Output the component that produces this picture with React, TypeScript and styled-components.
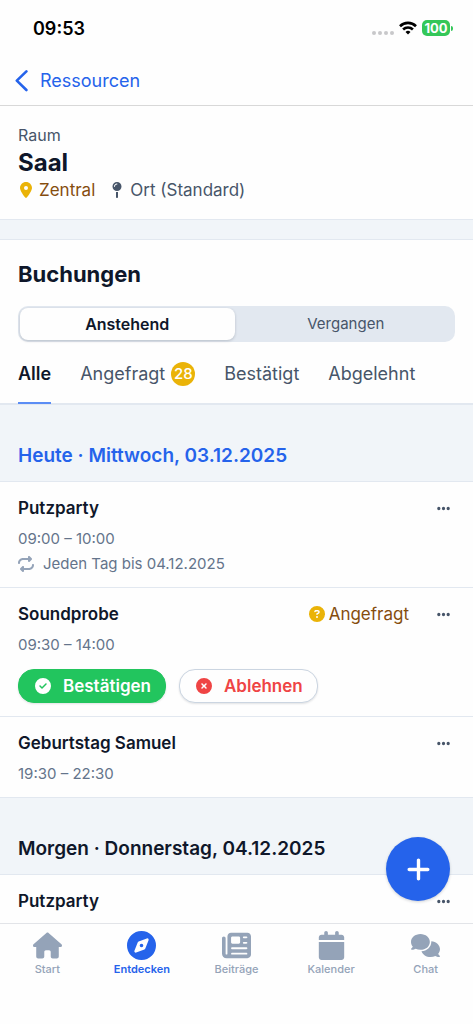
import React from 'react';
import styled, { createGlobalStyle } from 'styled-components';
import {
  FaCalendar,
  FaCircleCheck,
  FaCircleQuestion,
  FaCircleXmark,
  FaComments,
  FaCompass,
  FaEllipsis,
  FaHouse,
  FaLocationDot,
  FaMapPin,
  FaNewspaper,
  FaPlus,
  FaRepeat,
} from 'react-icons/fa6';

const color = {
  ink: '#0f172a',
  text: '#475569',
  muted: '#64748b',
  icon: '#94a3b8',
  line: '#e2e8f0',
  band: '#f1f5f9',
  blue: '#2563eb',
  yellow: '#eab308',
  brown: '#854d0e',
  green: '#22c55e',
  red: '#ef4444',
};

const GlobalStyle = createGlobalStyle`
  * { box-sizing: border-box; }
  body {
    margin: 0;
    background: #fff;
    color: ${color.ink};
    font-family: Inter, "Liberation Sans", sans-serif;
  }
  button { font: inherit; color: inherit; border: 0; padding: 0; background: none; cursor: pointer; }
  a { color: inherit; text-decoration: none; }
  h1, h2, h3, h4, p, ul { margin: 0; padding: 0; font-weight: inherit; list-style: none; }
  svg { display: block; flex: none; }
`;

const Screen = styled.div`
  display: flex;
  flex-direction: column;
  height: 100vh;
  background: #fefefe;
`;

const StatusBar = styled.div`
  display: flex;
  align-items: center;
  justify-content: space-between;
  height: 56px;
  padding: 0 20px 0 33px;
  color: #000;
  font-size: 18px;
  font-weight: 600;
`;

const StatusIcons = styled.div`
  display: flex;
  align-items: center;
  gap: 5px;
`;

const Battery = styled.div`
  display: flex;
  align-items: center;
  gap: 1px;
`;

const BatteryBody = styled.span`
  width: 28px;
  border-radius: 5px;
  background: #34c759;
  color: #fff;
  font-size: 13px;
  line-height: 16px;
  font-weight: 700;
  text-align: center;
`;

const BatteryCap = styled.span`
  width: 2px;
  height: 5px;
  border-radius: 0 2px 2px 0;
  background: #34c759;
`;

const Header = styled.header`
  display: flex;
  align-items: center;
  height: 50px;
  padding: 0 15px;
  border-bottom: 1px solid #d8d8d8;
`;

const BackLink = styled.a`
  display: flex;
  align-items: center;
  gap: 12px;
  color: ${color.blue};
  font-size: 18px;
  line-height: 24px;
`;

const Main = styled.main`
  flex: 1;
  min-height: 0;
  overflow-y: auto;
  scrollbar-width: none;
  background: ${color.band};
`;

const Summary = styled.section`
  padding: 17px 18px 18px;
  background: #fefefe;
  border-bottom: 1px solid ${color.line};
`;

const Kind = styled.p`
  color: ${color.text};
  font-size: 16px;
  line-height: 24px;
`;

const Name = styled.h1`
  font-size: 24px;
  line-height: 32px;
  font-weight: 700;
`;

const Facts = styled.ul`
  display: flex;
  gap: 14px;
`;

const Fact = styled.li<{ $tone: string }>`
  display: flex;
  align-items: center;
  gap: 5px;
  color: ${(p) => p.$tone};
  font-size: 17px;
  line-height: 22px;
`;

const Bookings = styled.section`
  margin-top: 19px;
  padding-top: 20px;
  background: #fefefe;
  border-top: 1px solid ${color.line};
`;

const BookingsTitle = styled.h2`
  padding: 0 18px;
  font-size: 22px;
  line-height: 28px;
  font-weight: 700;
`;

const Segments = styled.div`
  display: flex;
  gap: 4px;
  height: 36px;
  margin: 18px 18px 0;
  padding: 2px;
  border-radius: 10px;
  background: ${color.line};
`;

const Segment = styled.button<{ $on?: boolean }>`
  flex: 1 1 0;
  border-radius: 8px;
  font-size: ${(p) => (p.$on ? 16 : 15)}px;
  line-height: 20px;
  font-weight: ${(p) => (p.$on ? 600 : 400)};
  color: ${(p) => (p.$on ? color.ink : color.text)};
  background: ${(p) => (p.$on ? '#fefefe' : 'transparent')};
  box-shadow: ${(p) => (p.$on ? '0 1px 3px rgba(15, 23, 42, 0.2)' : 'none')};
`;

const Tabs = styled.div`
  display: flex;
  gap: 29px;
  padding: 0 18px;
  border-bottom: 2px solid ${color.line};
`;

const Tab = styled.button<{ $on?: boolean }>`
  display: flex;
  align-items: center;
  gap: 6px;
  margin-bottom: -1px;
  padding: 20px 0 16px;
  border-bottom: 2px solid ${(p) => (p.$on ? '#5b8df5' : 'transparent')};
  color: ${(p) => (p.$on ? color.ink : color.text)};
  font-size: 18px;
  line-height: 24px;
  font-weight: ${(p) => (p.$on ? 600 : 400)};
`;

const Badge = styled.span`
  width: 24px;
  border-radius: 12px;
  background: ${color.yellow};
  color: #fff;
  font-size: 15px;
  font-weight: 500;
  text-align: center;
`;

const DayTitle = styled.h3<{ $today?: boolean }>`
  padding: 39px 18px 13px;
  border-bottom: 1px solid ${color.line};
  background: ${color.band};
  color: ${(p) => (p.$today ? color.blue : color.ink)};
  font-size: 19px;
  line-height: 24px;
  font-weight: 600;
`;

const Booking = styled.article`
  padding: 14px 22px 11px 18px;
  border-bottom: 1px solid ${color.line};
  background: #fefefe;
`;

const BookingHead = styled.div`
  display: flex;
  align-items: center;
  line-height: 24px;
  margin-bottom: 6px;
`;

const BookingTitle = styled.h4`
  flex: 1;
  font-size: 17px;
  font-weight: 600;
`;

const State = styled.span`
  display: flex;
  align-items: center;
  gap: 4px;
  margin-right: 27px;
  color: ${color.brown};
  font-size: 17px;
`;

const MoreButton = styled.button`
  color: ${color.text};
`;

const Detail = styled.p`
  display: flex;
  align-items: center;
  gap: 9px;
  color: ${color.muted};
  font-size: 15px;
  line-height: 25px;

  svg { color: ${color.icon}; }
`;

const Actions = styled.div`
  display: flex;
  gap: 13px;
  padding: 12px 0 2px;
`;

const ActionButton = styled.button<{ $solid?: boolean }>`
  display: flex;
  align-items: center;
  gap: 12px;
  height: 34px;
  padding: 0 14px 0 16px;
  border: 1px solid ${(p) => (p.$solid ? color.green : '#cbd5e1')};
  border-radius: 16px;
  background: ${(p) => (p.$solid ? color.green : '#fefefe')};
  color: ${(p) => (p.$solid ? '#fff' : color.red)};
  box-shadow: 0 1px 2px rgba(15, 23, 42, 0.12);
  font-size: 17px;
  font-weight: 600;
`;

const Footer = styled.footer`
  position: relative;
`;

const AddButton = styled.button`
  position: absolute;
  right: 23px;
  bottom: calc(100% + 22px);
  display: flex;
  align-items: center;
  justify-content: center;
  width: 64px;
  height: 64px;
  border-radius: 50%;
  background: ${color.blue};
  color: #fff;
  box-shadow: 0 1px 3px rgba(15, 23, 42, 0.2);
`;

const TabBar = styled.nav`
  display: flex;
  padding: 7px 0 47px;
  border-top: 1px solid #e2e4e8;
  background: #fefefe;
`;

const TabLink = styled.a<{ $on?: boolean }>`
  flex: 1 1 0;
  display: flex;
  flex-direction: column;
  align-items: center;
  gap: 1px;
  color: ${(p) => (p.$on ? color.blue : color.icon)};
  font-size: 11px;
  line-height: 16px;
  font-weight: ${(p) => (p.$on ? 600 : 500)};
`;

interface Entry {
  title: string;
  time?: string;
  repeat?: string;
  requested?: boolean;
}

const today: Entry[] = [
  { title: 'Putzparty', time: '09:00 – 10:00', repeat: 'Jeden Tag bis 04.12.2025' },
  { title: 'Soundprobe', time: '09:30 – 14:00', requested: true },
  { title: 'Geburtstag Samuel', time: '19:30 – 22:30' },
];

const tomorrow: Entry[] = [{ title: 'Putzparty' }];

const destinations = [
  { label: 'Start', Icon: FaHouse },
  { label: 'Entdecken', Icon: FaCompass, on: true },
  { label: 'Beiträge', Icon: FaNewspaper },
  { label: 'Kalender', Icon: FaCalendar },
  { label: 'Chat', Icon: FaComments },
];

function BookingRow({ entry }: { entry: Entry }) {
  return (
    <Booking>
      <BookingHead>
        <BookingTitle>{entry.title}</BookingTitle>
        {entry.requested && (
          <State>
            <FaCircleQuestion size={16} color={color.yellow} />
            Angefragt
          </State>
        )}
        <MoreButton aria-label="Mehr">
          <FaEllipsis size={15} />
        </MoreButton>
      </BookingHead>
      {entry.time && <Detail>{entry.time}</Detail>}
      {entry.repeat && (
        <Detail>
          <FaRepeat size={16} />
          {entry.repeat}
        </Detail>
      )}
      {entry.requested && (
        <Actions>
          <ActionButton $solid>
            <FaCircleCheck size={16} />
            Bestätigen
          </ActionButton>
          <ActionButton>
            <FaCircleXmark size={16} />
            Ablehnen
          </ActionButton>
        </Actions>
      )}
    </Booking>
  );
}

export default function App() {
  return (
    <>
      <GlobalStyle />
      <Screen>
        <StatusBar>
          <span>09:53</span>
          <StatusIcons>
            <svg width="22" height="14" viewBox="0 0 22 14" fill="#c8c8ca">
              <circle cx="2" cy="12" r="2" />
              <circle cx="8" cy="12" r="2" />
              <circle cx="14" cy="12" r="2" />
              <circle cx="20" cy="12" r="2" />
            </svg>
            <svg width="18" height="14" viewBox="0 0 18 14" fill="none" stroke="#000" strokeWidth="2.6">
              <path d="M1 5.2a11.4 11.4 0 0 1 16 0" />
              <path d="M4.1 8.5a7 7 0 0 1 9.8 0" />
              <path d="M9 13.4 6.5 10.9a3.6 3.6 0 0 1 5 0Z" fill="#000" stroke="none" />
            </svg>
            <Battery>
              <BatteryBody>100</BatteryBody>
              <BatteryCap />
            </Battery>
          </StatusIcons>
        </StatusBar>
        <Header>
          <BackLink href="#ressourcen">
            <svg width="13" height="22" viewBox="0 0 13 22" fill="none" stroke="currentColor" strokeWidth="2.6" strokeLinecap="round" strokeLinejoin="round">
              <path d="M11.4 1.4 1.8 10.6l9.6 9.4" />
            </svg>
            Ressourcen
          </BackLink>
        </Header>
        <Main>
          <Summary>
            <Kind>Raum</Kind>
            <Name>Saal</Name>
            <Facts>
              <Fact $tone={color.brown}>
                <FaLocationDot size={16} color={color.yellow} />
                Zentral
              </Fact>
              <Fact $tone={color.text}>
                <FaMapPin size={16} />
                Ort (Standard)
              </Fact>
            </Facts>
          </Summary>
          <Bookings>
            <BookingsTitle>Buchungen</BookingsTitle>
            <Segments>
              <Segment $on>Anstehend</Segment>
              <Segment>Vergangen</Segment>
            </Segments>
            <Tabs>
              <Tab $on>Alle</Tab>
              <Tab>
                Angefragt <Badge>28</Badge>
              </Tab>
              <Tab>Bestätigt</Tab>
              <Tab>Abgelehnt</Tab>
            </Tabs>
            <DayTitle $today>Heute · Mittwoch, 03.12.2025</DayTitle>
            {today.map((entry) => (
              <BookingRow key={entry.title} entry={entry} />
            ))}
            <DayTitle>Morgen · Donnerstag, 04.12.2025</DayTitle>
            {tomorrow.map((entry) => (
              <BookingRow key={entry.title} entry={entry} />
            ))}
          </Bookings>
        </Main>
        <Footer>
          <AddButton aria-label="Neue Buchung">
            <FaPlus size={27} />
          </AddButton>
          <TabBar>
            {destinations.map(({ label, Icon, on }) => (
              <TabLink key={label} href={`#${label.toLowerCase()}`} $on={on}>
                <Icon size={29} />
                {label}
              </TabLink>
            ))}
          </TabBar>
        </Footer>
      </Screen>
    </>
  );
}
